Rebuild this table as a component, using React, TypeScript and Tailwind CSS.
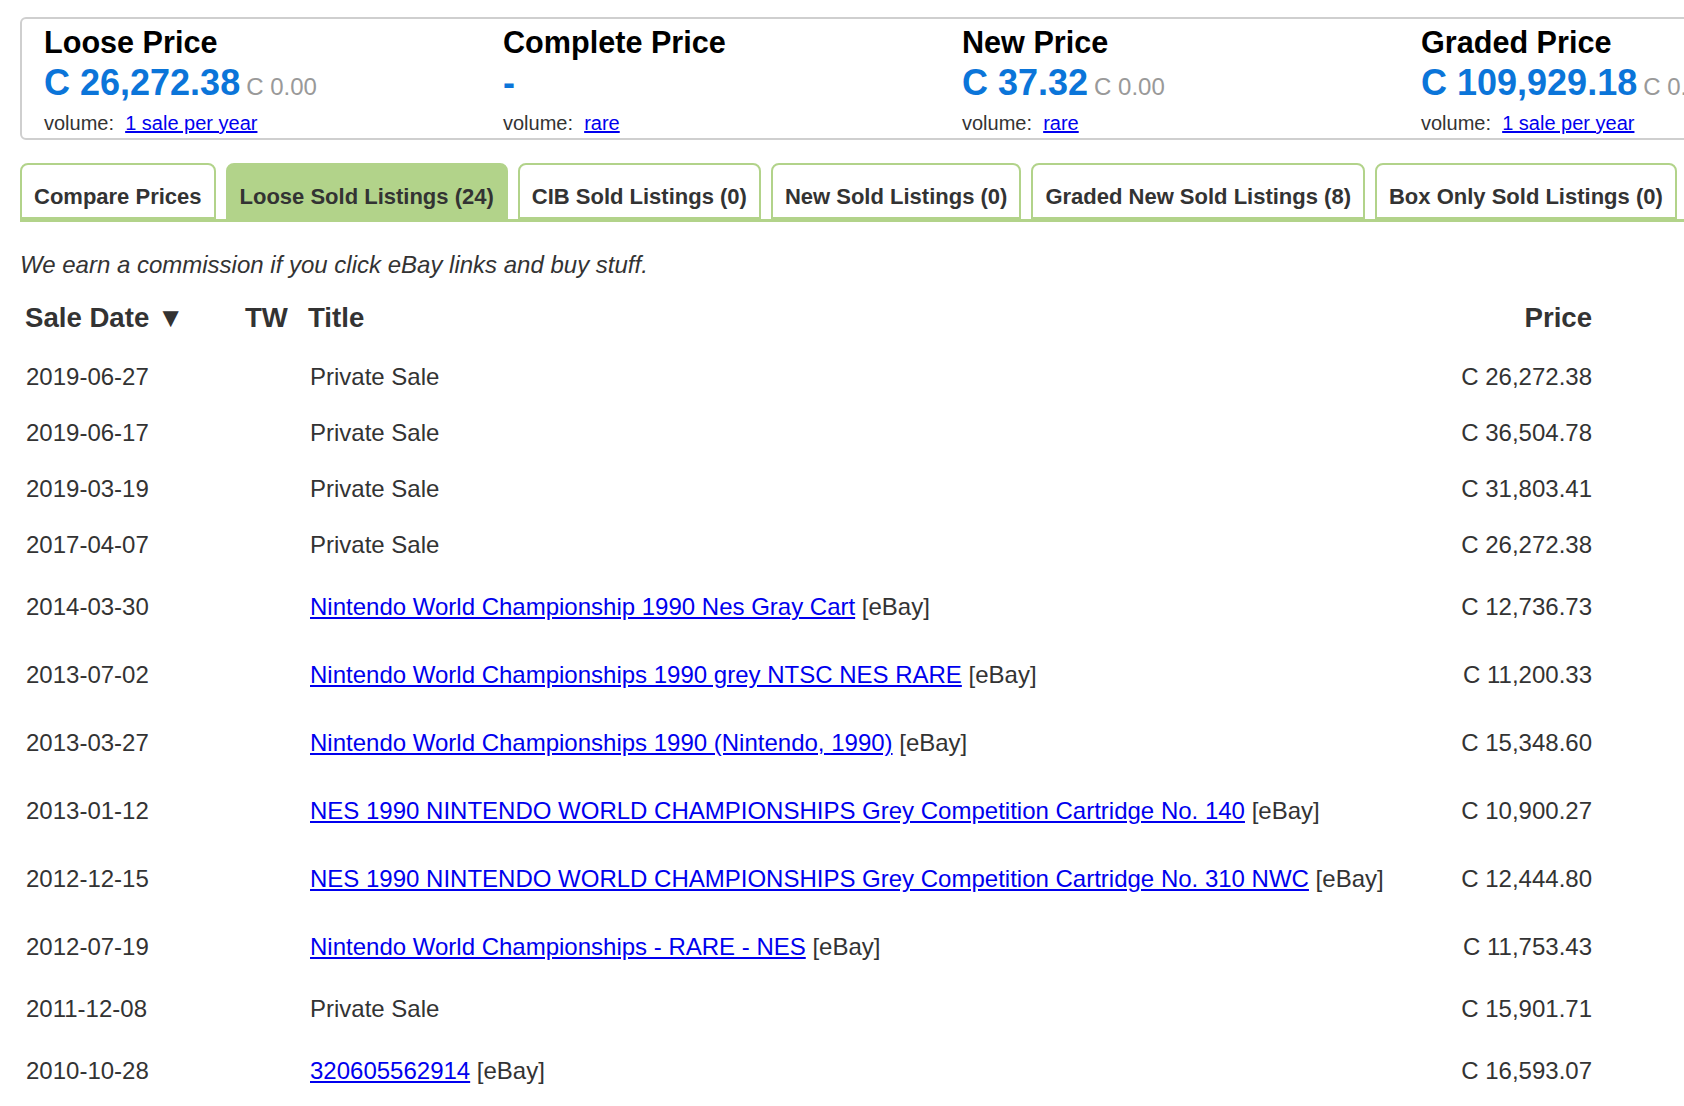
import React from "react";

type Sale = {
  date: string;
  title: string;
  ebay?: boolean;
  price: string;
};

const SALES: Sale[] = [
  { date: "2019-06-27", title: "Private Sale", price: "C 26,272.38" },
  { date: "2019-06-17", title: "Private Sale", price: "C 36,504.78" },
  { date: "2019-03-19", title: "Private Sale", price: "C 31,803.41" },
  { date: "2017-04-07", title: "Private Sale", price: "C 26,272.38" },
  { date: "2014-03-30", title: "Nintendo World Championship 1990 Nes Gray Cart", ebay: true, price: "C 12,736.73" },
  { date: "2013-07-02", title: "Nintendo World Championships 1990 grey NTSC NES RARE", ebay: true, price: "C 11,200.33" },
  { date: "2013-03-27", title: "Nintendo World Championships 1990 (Nintendo, 1990)", ebay: true, price: "C 15,348.60" },
  { date: "2013-01-12", title: "NES 1990 NINTENDO WORLD CHAMPIONSHIPS Grey Competition Cartridge No. 140", ebay: true, price: "C 10,900.27" },
  { date: "2012-12-15", title: "NES 1990 NINTENDO WORLD CHAMPIONSHIPS Grey Competition Cartridge No. 310 NWC", ebay: true, price: "C 12,444.80" },
  { date: "2012-07-19", title: "Nintendo World Championships - RARE - NES", ebay: true, price: "C 11,753.43" },
  { date: "2011-12-08", title: "Private Sale", price: "C 15,901.71" },
  { date: "2010-10-28", title: "320605562914", ebay: true, price: "C 16,593.07" },
];

const PRICES = [
  { label: "Loose Price", value: "C 26,272.38", change: "C 0.00", volume: "1 sale per year" },
  { label: "Complete Price", value: "-", change: "", volume: "rare" },
  { label: "New Price", value: "C 37.32", change: "C 0.00", volume: "rare" },
  { label: "Graded Price", value: "C 109,929.18", change: "C 0.00", volume: "1 sale per year" },
];

const TABS = [
  { label: "Compare Prices" },
  { label: "Loose Sold Listings (24)", active: true },
  { label: "CIB Sold Listings (0)" },
  { label: "New Sold Listings (0)" },
  { label: "Graded New Sold Listings (8)" },
  { label: "Box Only Sold Listings (0)" },
];

export default function App() {
  return (
    <div className="h-[1106px] w-[1684px] overflow-hidden bg-white font-['Liberation_Sans',Arial,sans-serif] text-[#333]">
      <div className="pl-[20px] pt-[17px]">
        {/* price summary box */}
        <div className="grid w-[1900px] grid-cols-[repeat(4,459px)] rounded-md border-2 border-[#cfcfcf] pb-[3px] pl-[22px] pt-[6px]">
          {PRICES.map((p) => (
            <div key={p.label}>
              <h2 className="text-[30.6px] font-bold leading-[34px] text-black">{p.label}</h2>
              <div className="mt-[2px] whitespace-nowrap text-[36px] font-bold leading-[44px] text-[#0b75d9]">
                {p.value}
                {p.change && (
                  <span className="ml-[6px] text-[24px] font-normal leading-none text-[#999]">{p.change}</span>
                )}
              </div>
              <div className="mt-[6px] text-[20px] leading-[24px] text-[#333]">
                volume:&nbsp;{" "}
                <a href="#" className="text-[#0000ee] underline">
                  {p.volume}
                </a>
              </div>
            </div>
          ))}
        </div>

        {/* tabs */}
        <div className="mt-[23px] flex w-[1700px] gap-[10px] border-b-[3px] border-[#b2d38a]">
          {TABS.map((t) => (
            <div
              key={t.label}
              className={
                t.active
                  ? "shrink-0 whitespace-nowrap rounded-t-lg border-2 border-[#b2d38a] bg-[#b2d38a] px-3 pb-[8px] pt-[19px] text-[22px] font-bold leading-[25px] text-[#333]"
                  : "shrink-0 whitespace-nowrap rounded-t-lg border-2 border-[#b2d38a] bg-white px-3 pb-[8px] pt-[19px] text-[22px] font-bold leading-[25px] text-[#333]"
              }
            >
              {t.label}
            </div>
          ))}
        </div>

        <p className="mt-[29px] text-[24px] italic leading-[28px] text-[#333]">
          We earn a commission if you click eBay links and buy stuff.
        </p>

        {/* sales table */}
        <div className="mt-[8px] w-[1577px]">
          <div className="flex h-[62px] items-center text-[27.6px] font-bold text-[#333]">
            <div className="w-[218px] shrink-0 pl-[5px]">Sale Date ▼</div>
            <div className="w-[65px] shrink-0 pl-[7px]">TW</div>
            <div className="flex-1 pl-[5px]">Title</div>
            <div className="w-[220px] shrink-0 pr-[5px] text-right">Price</div>
          </div>
          {SALES.map((s, i) => (
            <div
              key={i}
              className={
                s.ebay
                  ? "flex h-[68px] items-center text-[24px] text-[#333]"
                  : "flex h-[56px] items-center text-[24px] text-[#333]"
              }
            >
              <div className="w-[218px] shrink-0 pl-[6px]">{s.date}</div>
              <div className="w-[65px] shrink-0" />
              <div className="min-w-0 flex-1 whitespace-nowrap pl-[7px]">
                {s.ebay ? (
                  <>
                    <a href="#" className="text-[#0000ee] underline">
                      {s.title}
                    </a>{" "}
                    [eBay]
                  </>
                ) : (
                  s.title
                )}
              </div>
              <div className="w-[220px] shrink-0 pr-[5px] text-right">{s.price}</div>
            </div>
          ))}
        </div>
      </div>
    </div>
  );
}
